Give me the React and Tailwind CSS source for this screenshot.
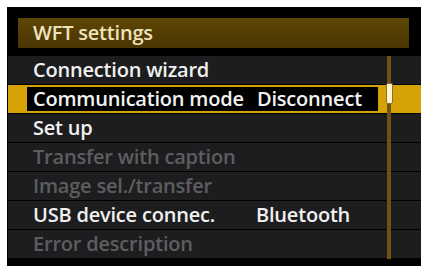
export default function App() {
  const rows = [
    { label: "Connection wizard", on: true },
    { label: "Communication mode", value: "Disconnect", on: true, sel: true },
    { label: "Set up", on: true },
    { label: "Transfer with caption", on: false },
    { label: "Image sel./transfer", on: false },
    { label: "USB device connec.", value: "Bluetooth", on: true },
    { label: "Error description", on: false },
  ];
  return (
    <div className="w-[423px] h-[268px] bg-white pt-[7px] pl-[7px]" style={{ fontFamily: '"Open Sans", "Noto Sans", sans-serif' }}>
      <div className="relative w-[414px] h-[259px] bg-black pt-[11px]">
        <div className="ml-[11px] w-[391px] h-[30px] bg-gradient-to-b from-[#5e4604] to-[#4a3502] flex items-center pl-[15px] text-[20px] leading-none font-semibold text-[#efe3bd] tracking-[-0.2px]">
          WFT settings
        </div>
        <div className="mt-[8px] flex flex-col gap-[1px] pl-[1px]">
          {rows.map((r, i) =>
            r.sel ? (
              <div key={i} className="h-[28px] bg-[#d6a206] flex items-center pl-[19px]">
                <div className="w-[351px] h-[24px] bg-black flex items-center pl-[6px] text-[20px] font-semibold text-[#f2f2f2] leading-none tracking-[-0.2px]">
                  <span className="w-[224px]">{r.label}</span>
                  <span>{r.value}</span>
                </div>
              </div>
            ) : (
              <div key={i} className={`h-[28px] bg-[#1d1d1f] flex items-center pl-[25px] text-[20px] font-semibold leading-none tracking-[-0.2px] ${r.on ? "text-[#f0f0f0]" : "text-[#5e5e60]"}`}>
                <span className="w-[223px]">{r.label}</span>
                {r.value && <span>{r.value}</span>}
              </div>
            )
          )}
        </div>
        <div className="absolute left-[380px] top-[49px] w-[4px] h-[203px] bg-[#6e5410]" />
        <div className="absolute left-[379px] top-[76px] w-[7px] h-[21px] bg-[#fff6d2] rounded-[2px] border border-[#8a7030]" />
      </div>
    </div>
  );
}
